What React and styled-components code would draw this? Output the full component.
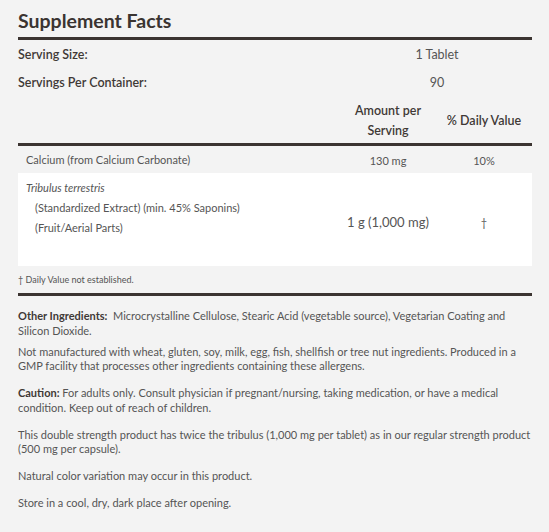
import styled, { createGlobalStyle } from 'styled-components'

const Global = createGlobalStyle`
  *, *::before, *::after {
    box-sizing: border-box;
  }
  html, body {
    margin: 0;
    padding: 0;
    background: #f3f3f3;
  }
  body {
    font-family: Lato, "Open Sans", sans-serif;
    color: #4b4542;
  }
`

const Page = styled.div`
  width: 549px;
  padding: 7px 17px 0 18px;
`

const Title = styled.h1`
  margin: 0;
  font-size: 19.5px;
  font-weight: 700;
  color: #3a3431;
  line-height: 28px;
  height: 33px;
  padding-bottom: 2px;
  border-bottom: 3px solid #3b3431;
`

const InfoRow = styled.div`
  display: grid;
  grid-template-columns: 1fr 190px;
  height: 28px;
  align-items: center;
  font-size: 12.5px;
`

const InfoLabel = styled.div`
  font-weight: 600;
  color: #3f3936;
`

const InfoValue = styled.div`
  text-align: center;
  color: #555;
`

const TableHead = styled.div`
  display: grid;
  grid-template-columns: 1fr 96px 96px;
  align-items: center;
  height: 50px;
  padding-top: 2px;
  border-bottom: 3px solid #3b3431;
  font-size: 12.5px;
  font-weight: 600;
  color: #3f3936;
  text-align: center;
  line-height: 20px;
`

const Row = styled.div`
  display: grid;
  grid-template-columns: 1fr 96px 96px;
  align-items: ${p => p.$top ? 'start' : 'center'};
  background: ${p => p.$white ? '#fff' : 'transparent'};
  padding: ${p => p.$pad || '1px 0 0 8px'};
  height: ${p => p.$h || '27px'};
  font-size: 11px;
`

const Name = styled.div`
  line-height: 20px;
  color: #555;
`

const Sub = styled.div`
  padding-left: ${p => p.$indent || '0'};
  font-style: ${p => p.$italic ? 'italic' : 'normal'};
`

const Cell = styled.div`
  text-align: center;
  align-self: center;
  font-size: ${p => p.$big ? '13px' : '11px'};
  color: #555;
`

const Footnote = styled.div`
  font-size: 9px;
  color: #555;
  height: 30px;
  line-height: 28px;
  border-bottom: 3px solid #3b3431;
`

const Notes = styled.div`
  padding-top: 13px;
  font-size: 11px;
  line-height: 14.5px;
  color: #555;
`

const Para = styled.p`
  margin: 0 0 ${p => p.$gap || '12.5px'};
`

const Label = styled.b`
  font-weight: 700;
  color: #3f3936;
`

export default function App() {
  return (
    <Page>
      <Global />
      <Title>Supplement Facts</Title>
      <InfoRow>
        <InfoLabel>Serving Size:</InfoLabel>
        <InfoValue>1 Tablet</InfoValue>
      </InfoRow>
      <InfoRow>
        <InfoLabel>Servings Per Container:</InfoLabel>
        <InfoValue>90</InfoValue>
      </InfoRow>
      <TableHead>
        <span />
        <span>Amount per<br />Serving</span>
        <span>% Daily Value</span>
      </TableHead>
      <Row $h="27px">
        <Name>Calcium (from Calcium Carbonate)</Name>
        <Cell>130 mg</Cell>
        <Cell>10%</Cell>
      </Row>
      <Row $white $top $h="93px" $pad="5px 0 0 8px">
        <Name>
          <Sub $italic>Tribulus terrestris</Sub>
          <Sub $indent="9px">(Standardized Extract) (min. 45% Saponins)</Sub>
          <Sub $indent="9px">(Fruit/Aerial Parts)</Sub>
        </Name>
        <Cell $big>1 g (1,000 mg)</Cell>
        <Cell>†</Cell>
      </Row>
      <Footnote>† Daily Value not established.</Footnote>
      <Notes>
        <Para $gap="6.5px">
          <Label>Other Ingredients:</Label>&nbsp; Microcrystalline Cellulose, Stearic Acid (vegetable source), Vegetarian Coating and Silicon Dioxide.
        </Para>
        <Para>
          Not manufactured with wheat, gluten, soy, milk, egg, fish, shellfish or tree nut ingredients. Produced in a GMP facility that processes other ingredients containing these allergens.
        </Para>
        <Para>
          <Label>Caution:</Label> For adults only. Consult physician if pregnant/nursing, taking medication, or have a medical condition. Keep out of reach of children.
        </Para>
        <Para>
          This double strength product has twice the tribulus (1,000 mg per tablet) as in our regular strength product (500 mg per capsule).
        </Para>
        <Para>Natural color variation may occur in this product.</Para>
        <Para>Store in a cool, dry, dark place after opening.</Para>
      </Notes>
    </Page>
  )
}
